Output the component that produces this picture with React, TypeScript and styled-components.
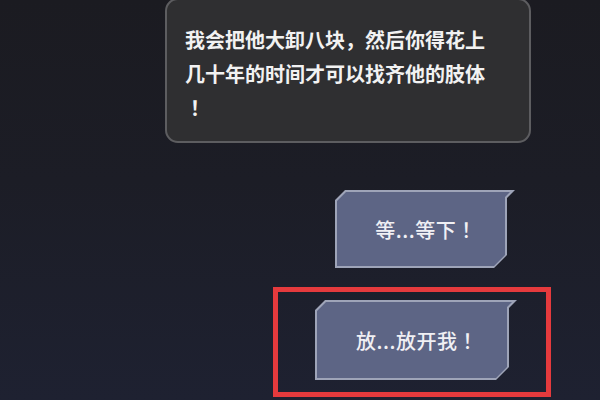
import styled, { createGlobalStyle } from "styled-components";

const GlobalStyle = createGlobalStyle`
  html, body {
    margin: 0;
    padding: 0;
    background: #1c1d25;
  }
  * {
    box-sizing: border-box;
  }
`;

const font = `"Noto Sans CJK SC", "Noto Sans", sans-serif`;

function App() {
  return (
    <>
      <GlobalStyle />
      <Screen>
        <SpeechBubble>
          我会把他大卸八块，然后你得花上几十年的时间才可以找齐他的肢体
          <Bang>！</Bang>
        </SpeechBubble>

        <ReplyRow $right={85} $top={47}>
          <Reply $width={180} $height={78}>
            <ReplyFill>
              等...等下<Bang>！</Bang>
            </ReplyFill>
          </Reply>
        </ReplyRow>

        <ReplyRow $right={49} $top={19}>
          <Highlight>
            <Reply $width={202} $height={80}>
              <ReplyFill>
                放...放开我<Bang>！</Bang>
              </ReplyFill>
            </Reply>
          </Highlight>
        </ReplyRow>
      </Screen>
    </>
  );
}

const Screen = styled.div`
  width: 600px;
  height: 400px;
  overflow: hidden;
  display: flex;
  flex-direction: column;
  background: linear-gradient(180deg, #1b1b21 0%, #1c1d26 45%, #1e2131 100%);
  font-family: ${font};
  text-spacing-trim: space-all;
`;

// centred full-width exclamation, as the game font draws it
const Bang = styled.span`
  font-family: "Noto Sans CJK JP", "Noto Sans CJK SC", sans-serif;
`;

const SpeechBubble = styled.div`
  margin: -2px 0 0 165px;
  width: 366px;
  height: 145px;
  padding: 23px 30px 0 18px;
  background: #2f2f31;
  border: 2px solid #5d5d60;
  border-radius: 13px;
  color: #f2f2f2;
  font-size: 20px;
  font-weight: 700;
  line-height: 34px;
  line-break: anywhere;
`;

const ReplyRow = styled.div<{ $right: number; $top: number }>`
  display: flex;
  justify-content: flex-end;
  padding-right: ${(p) => p.$right}px;
  margin-top: ${(p) => p.$top}px;
`;

const Reply = styled.div<{ $width: number; $height: number }>`
  width: ${(p) => p.$width}px;
  height: ${(p) => p.$height}px;
  padding: 2px;
  display: flex;
  background: #9ea4b8;
  clip-path: polygon(
    10px 0,
    100% 0,
    calc(100% - 8px) 8px,
    calc(100% - 8px) calc(100% - 13px),
    calc(100% - 21px) 100%,
    0 100%,
    0 10px
  );
`;

const ReplyFill = styled.div`
  flex: 1;
  display: flex;
  align-items: center;
  justify-content: center;
  padding-left: 2px;
  background: #5d6585;
  color: #f0f0f4;
  font-size: 20px;
  font-weight: 500;
  letter-spacing: 0.5px;
  white-space: pre;
  clip-path: polygon(
    9px 0,
    calc(100% - 3px) 0,
    calc(100% - 8px) 5px,
    calc(100% - 8px) calc(100% - 11px),
    calc(100% - 19px) 100%,
    0 100%,
    0 9px
  );
`;

const Highlight = styled.div`
  width: 278px;
  height: 110px;
  padding: 8px 29px 0 37px;
  display: flex;
  justify-content: flex-end;
  border: 5px solid #e53a3d;
`;

export default App;
